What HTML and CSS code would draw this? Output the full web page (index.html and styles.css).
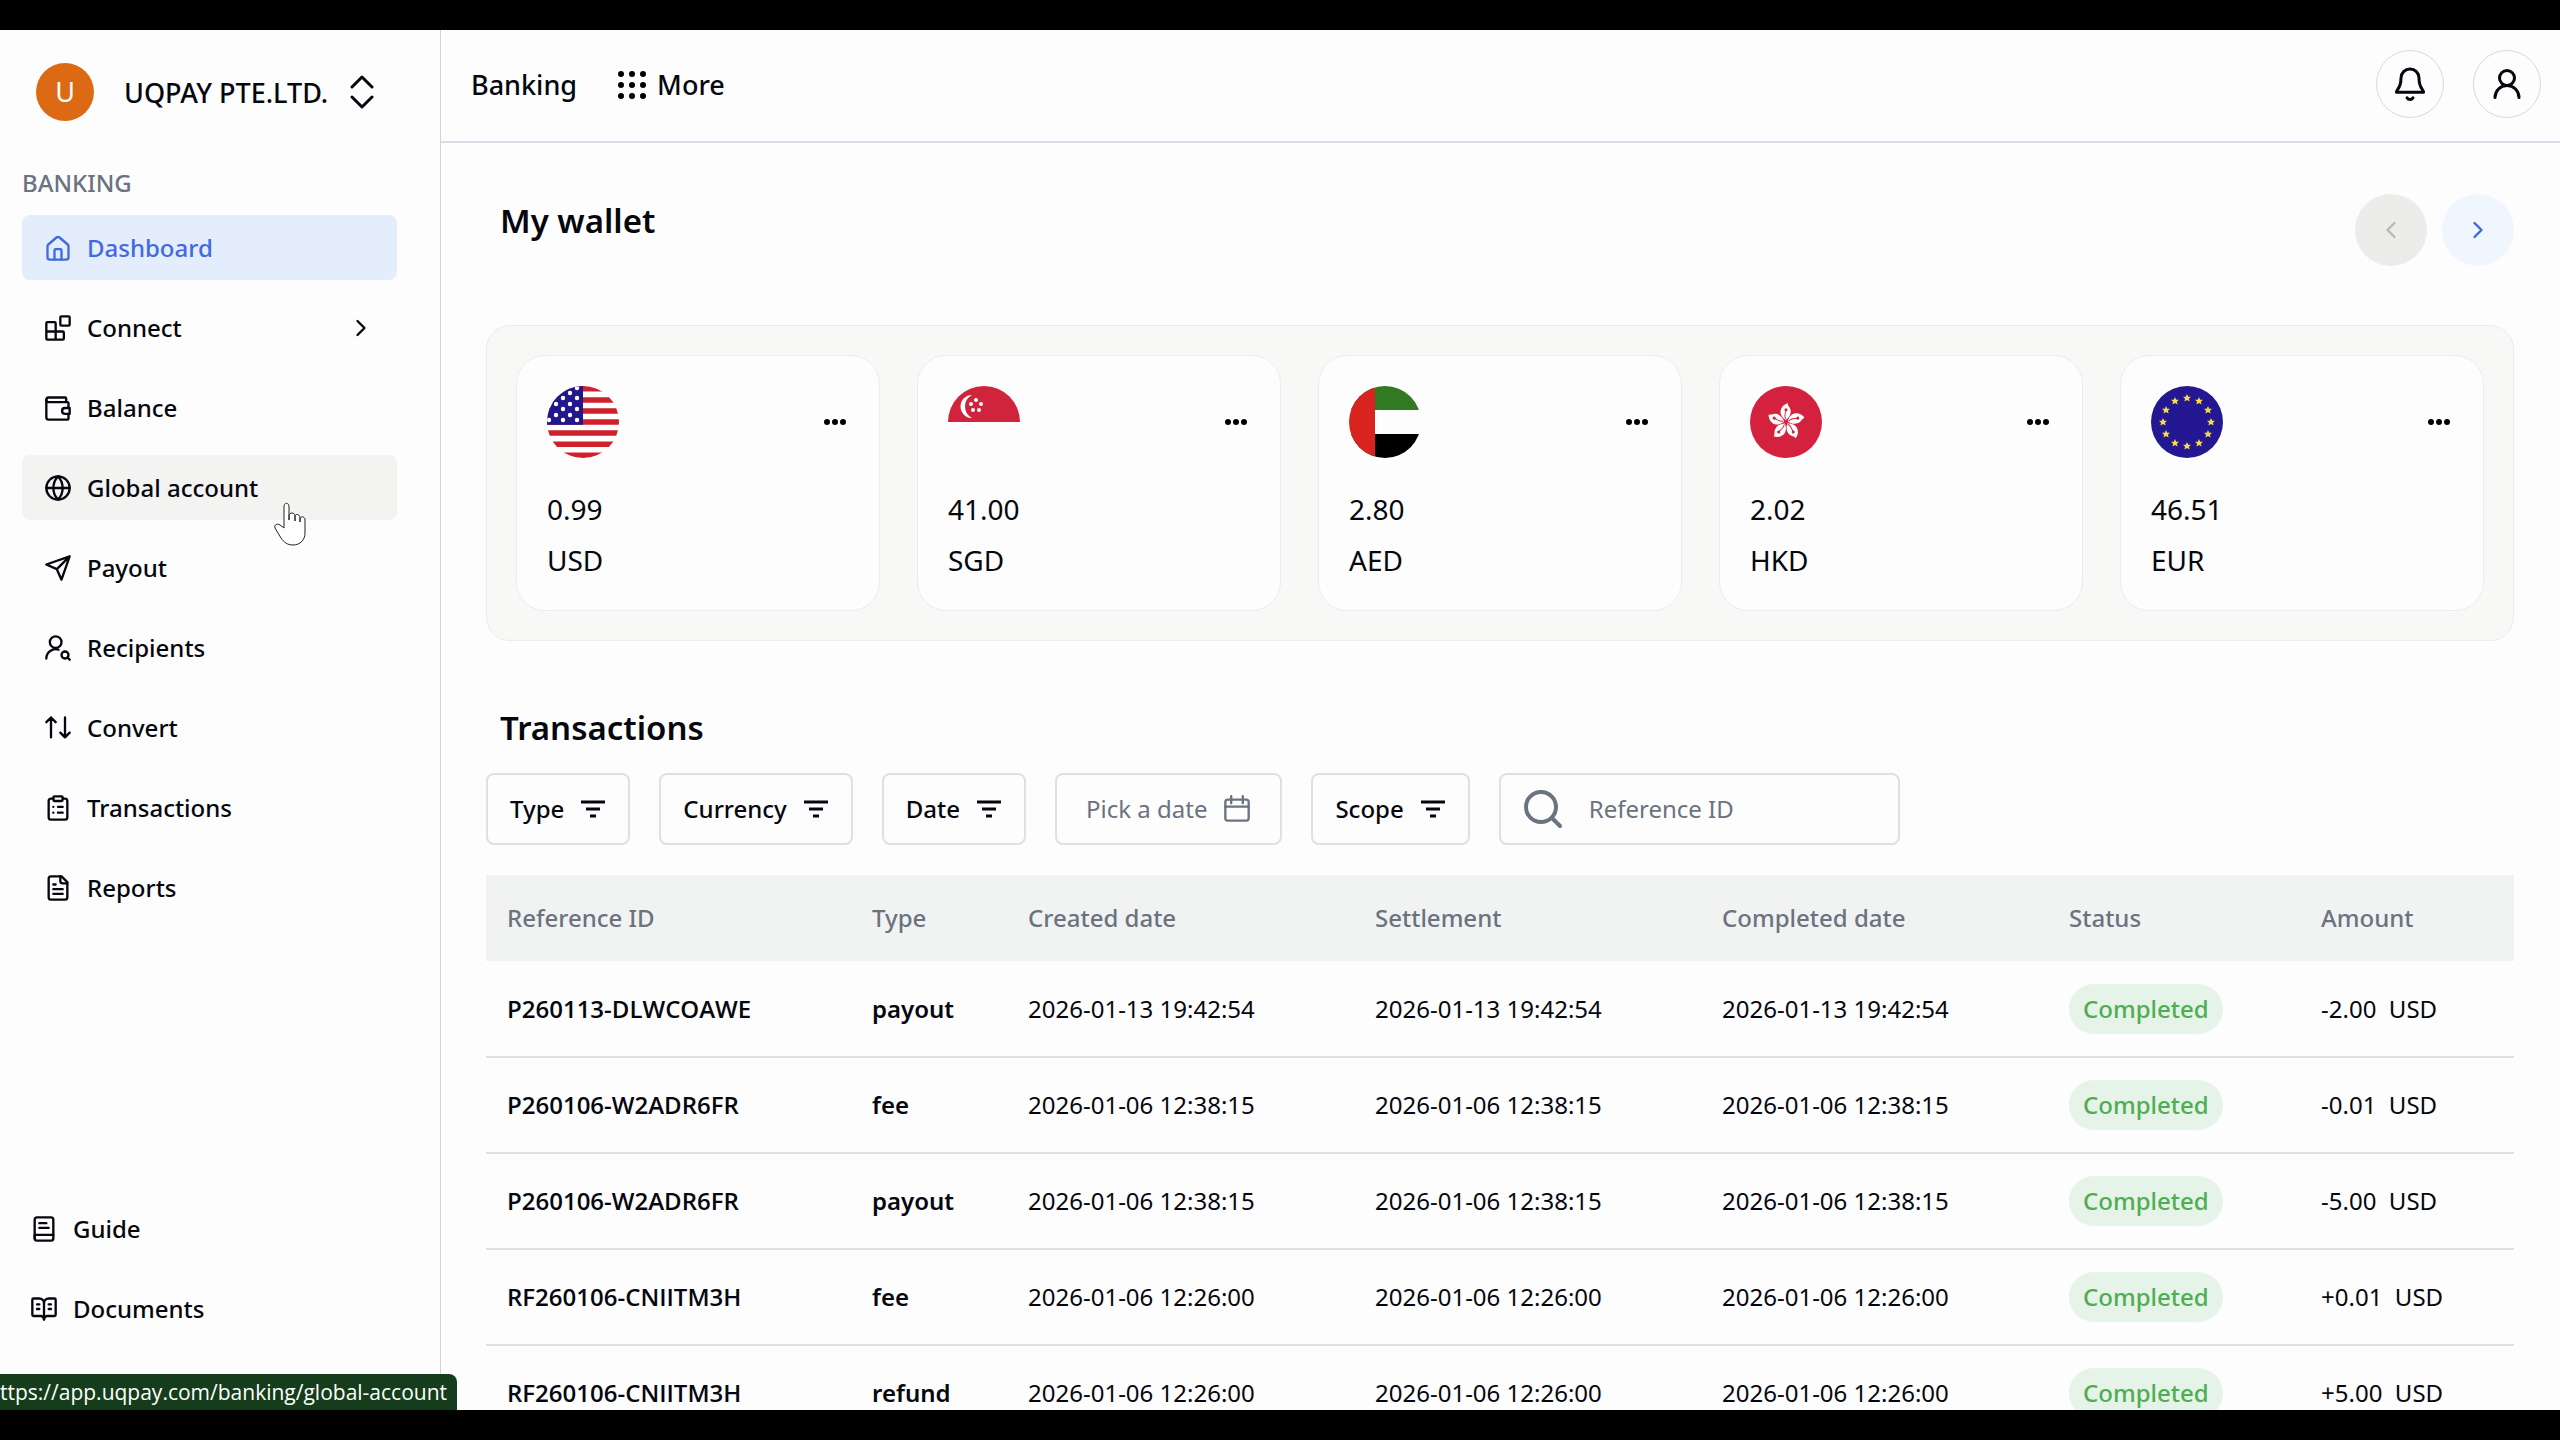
FILE: index.html
```html
<!DOCTYPE html>
<html lang="en">
<head>
  <meta charset="UTF-8" />
  <meta name="viewport" content="width=device-width, initial-scale=1.0" />
  <title>Dashboard - UQPAY</title>
  <link rel="stylesheet" href="styles.css">
</head>
<body>
  <!-- Shared icons -->
  <svg class="sprite" aria-hidden="true">
    <symbol id="i-filter" viewBox="0 0 26 18">
      <path d="M1 2h24M6 9h14M10 16h6" />
    </symbol>
    <symbol id="i-dots" viewBox="0 0 22 8">
      <circle cx="3" cy="4" r="3" /><circle cx="11" cy="4" r="3" /><circle cx="19" cy="4" r="3" />
    </symbol>
    <symbol id="i-right" viewBox="0 0 24 24">
      <path d="m9 18 6-6-6-6" />
    </symbol>
    <symbol id="i-petal" viewBox="-20 -20 40 40">
      <path d="M0-2C-5-5-7-10-5-14c1-3 4-5 7-6-1 3 3 4 3 9 0 4-2 6-5 9z" fill="#fff" />
      <path d="M0-3C-2-6-1-8 0-12" fill="none" stroke="#d4213d" stroke-width="1" />
      <circle cx="0" cy="-13" r="1.6" fill="#d4213d" />
    </symbol>
    <symbol id="i-star" viewBox="-5 -5 10 10">
      <path d="M0-4 1.2-1.3 4-1.2 1.9.7 2.6 3.6 0 2-2.6 3.6-1.9.7-4-1.2-1.2-1.3z" />
    </symbol>
  </svg>

  <div class="app">
    <aside class="sidebar">
      <button type="button" class="company">
        <span class="avatar">U</span>
        <span class="company-name">UQPAY PTE.LTD.</span>
        <svg class="icon company-icon" viewBox="0 0 24 34"><path d="M2 12 12 2l10 10M2 22l10 10 10-10" /></svg>
      </button>

      <h2 class="nav-title">BANKING</h2>
      <nav class="nav">
        <a href="#" class="nav-item active">
          <svg class="icon" viewBox="0 0 24 24"><path d="M3 10.5a2 2 0 0 1 .7-1.5l7-6a2 2 0 0 1 2.600 0l7 6a2 2 0 0 1 .7 1.500V20a2 2 0 0 1-2 2H5a2 2 0 0 1-2-2z" /><path d="M15 22v-8a1 1 0 0 0-1-1h-4a1 1 0 0 0-1 1v8" /></svg>
          Dashboard
        </a>
        <a href="#" class="nav-item">
          <svg class="icon" viewBox="0 0 24 24"><rect x="14" y="2" width="8" height="8" rx="1" /><path d="M10 22V8a1 1 0 0 0-1-1H3a1 1 0 0 0-1 1v13a1 1 0 0 0 1 1h13a1 1 0 0 0 1-1v-5a1 1 0 0 0-1-1H2" /></svg>
          Connect
          <svg class="icon nav-arrow"><use href="#i-right" /></svg>
        </a>
        <a href="#" class="nav-item">
          <svg class="icon" viewBox="0 0 24 24"><path d="M19 7V4a1 1 0 0 0-1-1H4a2 2 0 0 0 0 4h16a1 1 0 0 1 1 1v4" /><path d="M2 5v15a2 2 0 0 0 2 2h16a1 1 0 0 0 1-1v-4" /><path d="M22 12h-4a2.500 2.500 0 0 0 0 5h4z" /></svg>
          Balance
        </a>
        <a href="#" class="nav-item hovered">
          <svg class="icon" viewBox="0 0 24 24"><circle cx="12" cy="12" r="10" /><path d="M12 2a14.500 14.500 0 0 0 0 20 14.500 14.500 0 0 0 0-20M2 12h20" /></svg>
          Global account
          <svg class="cursor" viewBox="0 0 32 44"><path d="M10 26V5c0-5 5-5 5 0v13-4c0-4 6-4 6 0v5-4c0-4 5-3 5 1v4-3c0-3 5-3 5 1v13c0 7-5 12-12 12-6 0-9-3-12-7L1 26c-1-3 2-5 5-3z" /></svg>
        </a>
        <a href="#" class="nav-item">
          <svg class="icon" viewBox="0 0 24 24"><path d="m22 2-7 20-4-9-9-4zM22 2 11 13" /></svg>
          Payout
        </a>
        <a href="#" class="nav-item">
          <svg class="icon" viewBox="0 0 24 24"><circle cx="10" cy="7" r="5" /><path d="M2 21a8 8 0 0 1 10.400-7.600" /><circle cx="18" cy="18" r="3" /><path d="m22 22-1.900-1.900" /></svg>
          Recipients
        </a>
        <a href="#" class="nav-item">
          <svg class="icon" viewBox="0 0 24 24"><path d="m22 16-4 4-4-4M18 20V3M2 7l4-4 4 4M6 3v17" /></svg>
          Convert
        </a>
        <a href="#" class="nav-item">
          <svg class="icon" viewBox="0 0 24 24"><rect x="8" y="2" width="8" height="4" rx="1" /><path d="M16 4h2a2 2 0 0 1 2 2v14a2 2 0 0 1-2 2H6a2 2 0 0 1-2-2V6a2 2 0 0 1 2-2h2M12 11h4M12 16h4M8 11h.01M8 16h.01" /></svg>
          Transactions
        </a>
        <a href="#" class="nav-item">
          <svg class="icon" viewBox="0 0 24 24"><path d="M15 2H6a2 2 0 0 0-2 2v16a2 2 0 0 0 2 2h12a2 2 0 0 0 2-2V7z" /><path d="M14 2v4a2 2 0 0 0 2 2h4M10 9H8M16 13H8M16 17H8" /></svg>
          Reports
        </a>
      </nav>

      <nav class="nav nav-bottom">
        <a href="#" class="nav-item">
          <svg class="icon" viewBox="0 0 24 24"><rect x="4" y="2" width="16" height="20" rx="2" /><path d="M4 17h16M8 7h6M8 11h8M4 20v-3" /></svg>
          Guide
        </a>
        <a href="#" class="nav-item">
          <svg class="icon" viewBox="0 0 24 24"><path d="M12 7v14M16 12h2M16 8h2M6 12h2M6 8h2" /><path d="M3 18a1 1 0 0 1-1-1V4a1 1 0 0 1 1-1h5a4 4 0 0 1 4 4 4 4 0 0 1 4-4h5a1 1 0 0 1 1 1v13a1 1 0 0 1-1 1h-6a3 3 0 0 0-3 3 3 3 0 0 0-3-3z" /></svg>
          Documents
        </a>
      </nav>
    </aside>

    <div class="main">
      <header class="topbar">
        <a href="#" class="top-link">Banking</a>
        <a href="#" class="top-link">
          <svg class="grid-icon" viewBox="0 0 30 30"><circle cx="4" cy="4" r="3" /><circle cx="15" cy="4" r="3" /><circle cx="26" cy="4" r="3" /><circle cx="4" cy="15" r="3" /><circle cx="15" cy="15" r="3" /><circle cx="26" cy="15" r="3" /><circle cx="4" cy="26" r="3" /><circle cx="15" cy="26" r="3" /><circle cx="26" cy="26" r="3" /></svg>
          More
        </a>
        <div class="top-actions">
          <button type="button" class="round-btn" aria-label="Notifications">
            <svg class="icon" viewBox="0 0 24 24"><path d="M6 8a6 6 0 0 1 12 0c0 7 3 7.500 3 9.500H3C3 15.500 6 15 6 8M10 21.200a2.300 2.300 0 0 0 4 0" /></svg>
          </button>
          <button type="button" class="round-btn" aria-label="Account">
            <svg class="icon" viewBox="0 0 24 24"><circle cx="12" cy="8" r="5" /><path d="M20 21a8 8 0 0 0-16 0" /></svg>
          </button>
        </div>
      </header>

      <main class="content">
        <div class="section-head">
          <h1>My wallet</h1>
          <div class="pager">
            <button type="button" class="page-btn prev" aria-label="Previous" disabled>
              <svg class="icon" viewBox="0 0 24 24"><path d="m15 18-6-6 6-6" /></svg>
            </button>
            <button type="button" class="page-btn next" aria-label="Next">
              <svg class="icon"><use href="#i-right" /></svg>
            </button>
          </div>
        </div>

        <section class="wallets">
          <article class="wallet">
            <div class="wallet-top">
              <svg class="flag" viewBox="0 0 72 72">
                <rect width="72" height="72" fill="#fff" />
                <path d="M0 2.800h72M0 13.900h72M0 24.900h72M0 36h72M0 47.100h72M0 58.200h72M0 69.200h72" stroke="#d0202c" stroke-width="5.500" />
                <rect width="36" height="38.800" fill="#22178c" />
                <g fill="#fff">
                  <circle cx="30" cy="2" r="2.200" /><circle cx="23" cy="7" r="2.200" /><circle cx="16" cy="12" r="2.200" /><circle cx="30" cy="12" r="2.200" /><circle cx="9" cy="18" r="2.200" /><circle cx="23" cy="18" r="2.200" /><circle cx="16" cy="23" r="2.200" /><circle cx="30" cy="23" r="2.200" /><circle cx="9" cy="29" r="2.200" /><circle cx="23" cy="29" r="2.200" /><circle cx="2" cy="34" r="2.200" /><circle cx="16" cy="34" r="2.200" /><circle cx="30" cy="34" r="2.200" />
                </g>
              </svg>
              <button type="button" class="more-btn" aria-label="USD options"><svg><use href="#i-dots" /></svg></button>
            </div>
            <p>0.99</p>
            <p>USD</p>
          </article>
          <article class="wallet">
            <div class="wallet-top">
              <svg class="flag" viewBox="0 0 72 72">
                <rect width="72" height="36" fill="#d0233c" />
                <path d="M24 9a11.500 11.500 0 1 0 0 23 13 13 0 0 1 0-23z" fill="#fff" />
                <g fill="#fff">
                  <circle cx="28" cy="14" r="2" /><circle cx="23" cy="18" r="2" /><circle cx="33" cy="18" r="2" /><circle cx="25" cy="24" r="2" /><circle cx="31" cy="24" r="2" />
                </g>
              </svg>
              <button type="button" class="more-btn" aria-label="SGD options"><svg><use href="#i-dots" /></svg></button>
            </div>
            <p>41.00</p>
            <p>SGD</p>
          </article>
          <article class="wallet">
            <div class="wallet-top">
              <svg class="flag" viewBox="0 0 72 72">
                <rect width="72" height="24" fill="#317a22" />
                <rect y="48" width="72" height="24" fill="#000" />
                <rect width="26" height="72" fill="#d8231f" />
              </svg>
              <button type="button" class="more-btn" aria-label="AED options"><svg><use href="#i-dots" /></svg></button>
            </div>
            <p>2.80</p>
            <p>AED</p>
          </article>
          <article class="wallet">
            <div class="wallet-top">
              <svg class="flag" viewBox="0 0 72 72">
                <rect width="72" height="72" fill="#d4213d" />
                <g transform="translate(36 36) scale(.95)">
                  <use href="#i-petal" x="-20" y="-20" width="40" height="40" />
                  <use href="#i-petal" x="-20" y="-20" width="40" height="40" transform="rotate(72)" />
                  <use href="#i-petal" x="-20" y="-20" width="40" height="40" transform="rotate(144)" />
                  <use href="#i-petal" x="-20" y="-20" width="40" height="40" transform="rotate(216)" />
                  <use href="#i-petal" x="-20" y="-20" width="40" height="40" transform="rotate(288)" />
                </g>
              </svg>
              <button type="button" class="more-btn" aria-label="HKD options"><svg><use href="#i-dots" /></svg></button>
            </div>
            <p>2.02</p>
            <p>HKD</p>
          </article>
          <article class="wallet">
            <div class="wallet-top">
              <svg class="flag" viewBox="0 0 72 72">
                <rect width="72" height="72" fill="#241892" />
                <g fill="#f7dc45">
                  <use href="#i-star" x="31" y="7" width="10" height="10" /><use href="#i-star" x="43" y="10" width="10" height="10" /><use href="#i-star" x="52" y="19" width="10" height="10" /><use href="#i-star" x="55" y="31" width="10" height="10" /><use href="#i-star" x="52" y="43" width="10" height="10" /><use href="#i-star" x="43" y="52" width="10" height="10" /><use href="#i-star" x="31" y="55" width="10" height="10" /><use href="#i-star" x="19" y="52" width="10" height="10" /><use href="#i-star" x="10" y="43" width="10" height="10" /><use href="#i-star" x="7" y="31" width="10" height="10" /><use href="#i-star" x="10" y="19" width="10" height="10" /><use href="#i-star" x="19" y="10" width="10" height="10" />
                </g>
              </svg>
              <button type="button" class="more-btn" aria-label="EUR options"><svg><use href="#i-dots" /></svg></button>
            </div>
            <p>46.51</p>
            <p>EUR</p>
          </article>
        </section>

        <h2 class="table-title">Transactions</h2>
        <div class="filters">
          <button type="button" class="filter">Type <svg class="filter-icon"><use href="#i-filter" /></svg></button>
          <button type="button" class="filter">Currency <svg class="filter-icon"><use href="#i-filter" /></svg></button>
          <button type="button" class="filter">Date <svg class="filter-icon"><use href="#i-filter" /></svg></button>
          <button type="button" class="filter date-picker">Pick a date
            <svg class="icon" viewBox="0 0 24 24"><rect x="2" y="4" width="20" height="18" rx="2" /><path d="M7 1v6M17 1v6M2 10h20" /></svg>
          </button>
          <button type="button" class="filter">Scope <svg class="filter-icon"><use href="#i-filter" /></svg></button>
          <label class="search">
            <svg class="icon" viewBox="0 0 40 40"><circle cx="18" cy="18" r="15" /><path d="m29 29 8 8" /></svg>
            <input type="search" placeholder="Reference ID" aria-label="Reference ID" />
          </label>
        </div>

        <table class="transactions">
          <colgroup>
            <col class="col-ref"><col class="col-type"><col class="col-date"><col class="col-date"><col class="col-date"><col class="col-status"><col>
          </colgroup>
          <thead>
            <tr>
              <th>Reference ID</th>
              <th>Type</th>
              <th>Created date</th>
              <th>Settlement</th>
              <th>Completed date</th>
              <th>Status</th>
              <th>Amount</th>
            </tr>
          </thead>
          <tbody>
            <tr>
              <td class="ref-id">P260113-DLWCOAWE</td>
              <td class="type">payout</td>
              <td>2026-01-13 19:42:54</td>
              <td>2026-01-13 19:42:54</td>
              <td>2026-01-13 19:42:54</td>
              <td><span class="badge">Completed</span></td>
              <td>-2.00&nbsp; USD</td>
            </tr>
            <tr>
              <td class="ref-id">P260106-W2ADR6FR</td>
              <td class="type">fee</td>
              <td>2026-01-06 12:38:15</td>
              <td>2026-01-06 12:38:15</td>
              <td>2026-01-06 12:38:15</td>
              <td><span class="badge">Completed</span></td>
              <td>-0.01&nbsp; USD</td>
            </tr>
            <tr>
              <td class="ref-id">P260106-W2ADR6FR</td>
              <td class="type">payout</td>
              <td>2026-01-06 12:38:15</td>
              <td>2026-01-06 12:38:15</td>
              <td>2026-01-06 12:38:15</td>
              <td><span class="badge">Completed</span></td>
              <td>-5.00&nbsp; USD</td>
            </tr>
            <tr>
              <td class="ref-id">RF260106-CNIITM3H</td>
              <td class="type">fee</td>
              <td>2026-01-06 12:26:00</td>
              <td>2026-01-06 12:26:00</td>
              <td>2026-01-06 12:26:00</td>
              <td><span class="badge">Completed</span></td>
              <td>+0.01&nbsp; USD</td>
            </tr>
            <tr>
              <td class="ref-id">RF260106-CNIITM3H</td>
              <td class="type">refund</td>
              <td>2026-01-06 12:26:00</td>
              <td>2026-01-06 12:26:00</td>
              <td>2026-01-06 12:26:00</td>
              <td><span class="badge">Completed</span></td>
              <td>+5.00&nbsp; USD</td>
            </tr>
          </tbody>
        </table>
      </main>
    </div>

    <!-- Link preview in the corner -->
    <div class="link-preview">ttps://app.uqpay.com/banking/global-account</div>
  </div>
</body>
</html>
```
FILE: styles.css
```css
* {
  box-sizing: border-box;
  margin: 0;
  padding: 0;
}

body {
  height: 100vh;
  padding: 30px 0;
  background: #000;
  color: #05070f;
  font-family: "Noto Sans", "Open Sans", sans-serif;
  font-size: 24px;
  line-height: 36px;
  overflow: hidden;
}

button,
input {
  font: inherit;
  color: inherit;
  background: none;
  border: none;
}

button {
  cursor: pointer;
}

a {
  color: inherit;
  text-decoration: none;
}

.sprite {
  display: none;
}

.icon {
  width: 28px;
  height: 28px;
  flex-shrink: 0;
  fill: none;
  stroke: currentColor;
  stroke-width: 2;
  stroke-linecap: round;
  stroke-linejoin: round;
}

.app {
  position: relative;
  display: flex;
  height: 100%;
  background: #fdfdfd;
  overflow: hidden;
}

/* Sidebar */
.sidebar {
  display: flex;
  flex-direction: column;
  flex: 0 0 441px;
  padding: 33px 43px 69px 22px;
  border-right: 1px solid #d3d3df;
}

.company {
  display: flex;
  align-items: center;
  gap: 30px;
  height: 58px;
  padding-left: 14px;
  font-size: 27px;
  font-weight: 500;
  white-space: nowrap;
}

.company-name {
  padding-top: 2px;
}

.avatar {
  width: 58px;
  height: 58px;
  border-radius: 50%;
  background: #dc6a14;
  color: #fff;
  font-weight: 400;
  line-height: 58px;
}

.company-icon {
  width: 24px;
  height: 34px;
  margin-left: -8px;
  stroke-width: 3;
}

.nav-title {
  margin: 44px 0 14px;
  color: #6b7280;
  font-size: 24px;
  font-weight: 500;
}

.nav {
  display: flex;
  flex-direction: column;
  gap: 15px;
}

.nav-item {
  position: relative;
  display: flex;
  align-items: center;
  gap: 15px;
  height: 65px;
  padding: 0 22px;
  border-radius: 8px;
  font-weight: 500;
}

.nav-item.active {
  background: #e4edfb;
  color: #4169e1;
}

.nav-item.hovered {
  background: #f3f3f2;
}

.nav-arrow {
  margin-left: auto;
}

.nav-bottom {
  margin-top: auto;
}

.nav-bottom .nav-item {
  padding: 0 8px;
}

.cursor {
  position: absolute;
  top: 47px;
  left: 252px;
  width: 32px;
  height: 44px;
  fill: #fff;
  stroke: #222;
  stroke-width: 1;
  z-index: 1;
}

/* Top bar */
.main {
  flex: 1;
  min-width: 0;
}

.topbar {
  display: flex;
  align-items: center;
  gap: 40px;
  height: 113px;
  padding: 0 19px 4px 30px;
  border-bottom: 2px solid #dcdce6;
  font-size: 27px;
  font-weight: 500;
}

.top-link {
  display: flex;
  align-items: center;
  gap: 10px;
  padding-top: 2px;
}

.grid-icon {
  width: 30px;
  height: 30px;
}

.top-actions {
  display: flex;
  gap: 29px;
  margin-left: auto;
}

.round-btn,
.page-btn {
  display: flex;
  align-items: center;
  justify-content: center;
  border-radius: 50%;
}

.round-btn {
  width: 68px;
  height: 68px;
  border: 1px solid #d9d9d9;
}

.round-btn .icon {
  width: 36px;
  height: 36px;
}

/* Wallet */
.content {
  padding: 51px 46px 0 45px;
}

.section-head {
  display: flex;
  justify-content: space-between;
  padding-left: 14px;
}

h1,
.table-title {
  font-size: 33px;
  font-weight: 600;
  line-height: 54px;
}

.pager {
  display: flex;
  gap: 15px;
}

.page-btn {
  width: 72px;
  height: 72px;
}

.prev {
  background: #ececea;
  color: #b8b8b8;
}

.next {
  background: #f0f6fd;
  color: #3b66e0;
}

.wallets {
  display: flex;
  gap: 37px;
  margin-top: 59px;
  padding: 29px;
  border: 1px solid #ebebf0;
  border-radius: 24px;
  background: #f8f8f7;
}

.wallet {
  flex: 1;
  padding: 30px 33px 24px 30px;
  border: 1px solid #ececf2;
  border-radius: 29px;
  background: #fdfdfd;
  font-size: 28px;
  line-height: 51px;
}

.wallet-top {
  display: flex;
  align-items: center;
  justify-content: space-between;
  margin-bottom: 26px;
}

.flag {
  width: 72px;
  height: 72px;
  border-radius: 50%;
}

.more-btn,
.more-btn svg {
  display: block;
  width: 22px;
  height: 8px;
}

/* Transactions */
.table-title {
  margin: 60px 0 18px 14px;
}

.filters {
  display: flex;
  gap: 29px;
  margin-bottom: 30px;
}

.filter,
.search {
  display: flex;
  align-items: center;
  gap: 16px;
  height: 72px;
  padding: 0 22px;
  border: 2px solid #dfdfe8;
  border-radius: 8px;
}

.filter {
  font-weight: 500;
  white-space: nowrap;
}

.filter-icon {
  width: 26px;
  height: 18px;
  fill: none;
  stroke: currentColor;
  stroke-width: 3;
}

.date-picker {
  padding: 0 29px;
  color: #6b7280;
  font-weight: 400;
}

.search {
  gap: 26px;
  width: 401px;
  color: #6b7280;
}

.search .icon {
  width: 40px;
  height: 40px;
  stroke-width: 4;
}

.search input {
  width: 100%;
  min-width: 0;
  outline: none;
}

.search input::placeholder {
  color: #6b7280;
  opacity: 1;
}

.transactions {
  width: 100%;
  border-collapse: collapse;
  table-layout: fixed;
}

.col-ref {
  width: 18%;
}

.col-type {
  width: 156px;
}

.col-date {
  width: 347px;
}

.col-status {
  width: 252px;
}

.transactions th,
.transactions td {
  padding: 0 21px;
  text-align: left;
  white-space: nowrap;
}

.transactions th {
  height: 86px;
  background: #f1f3f2;
  color: #6b7280;
  font-weight: 500;
}

.transactions td {
  height: 96px;
  border-bottom: 2px solid #dfdfe6;
}

.transactions .ref-id {
  font-family: "Open Sans", "Noto Sans", sans-serif;
  font-weight: 600;
}

.transactions .type {
  font-weight: 600;
}

.badge {
  display: inline-block;
  padding: 7px 14px;
  border-radius: 25px;
  background: #e5f3e8;
  color: #51ad51;
  font-weight: 500;
}

.link-preview {
  position: absolute;
  left: 0;
  bottom: 0;
  height: 36px;
  padding-right: 10px;
  border-top-right-radius: 8px;
  background: #163d1b;
  color: #fff;
  font-family: "Open Sans", "Noto Sans", sans-serif;
  font-size: 21px;
  white-space: nowrap;
}
```
